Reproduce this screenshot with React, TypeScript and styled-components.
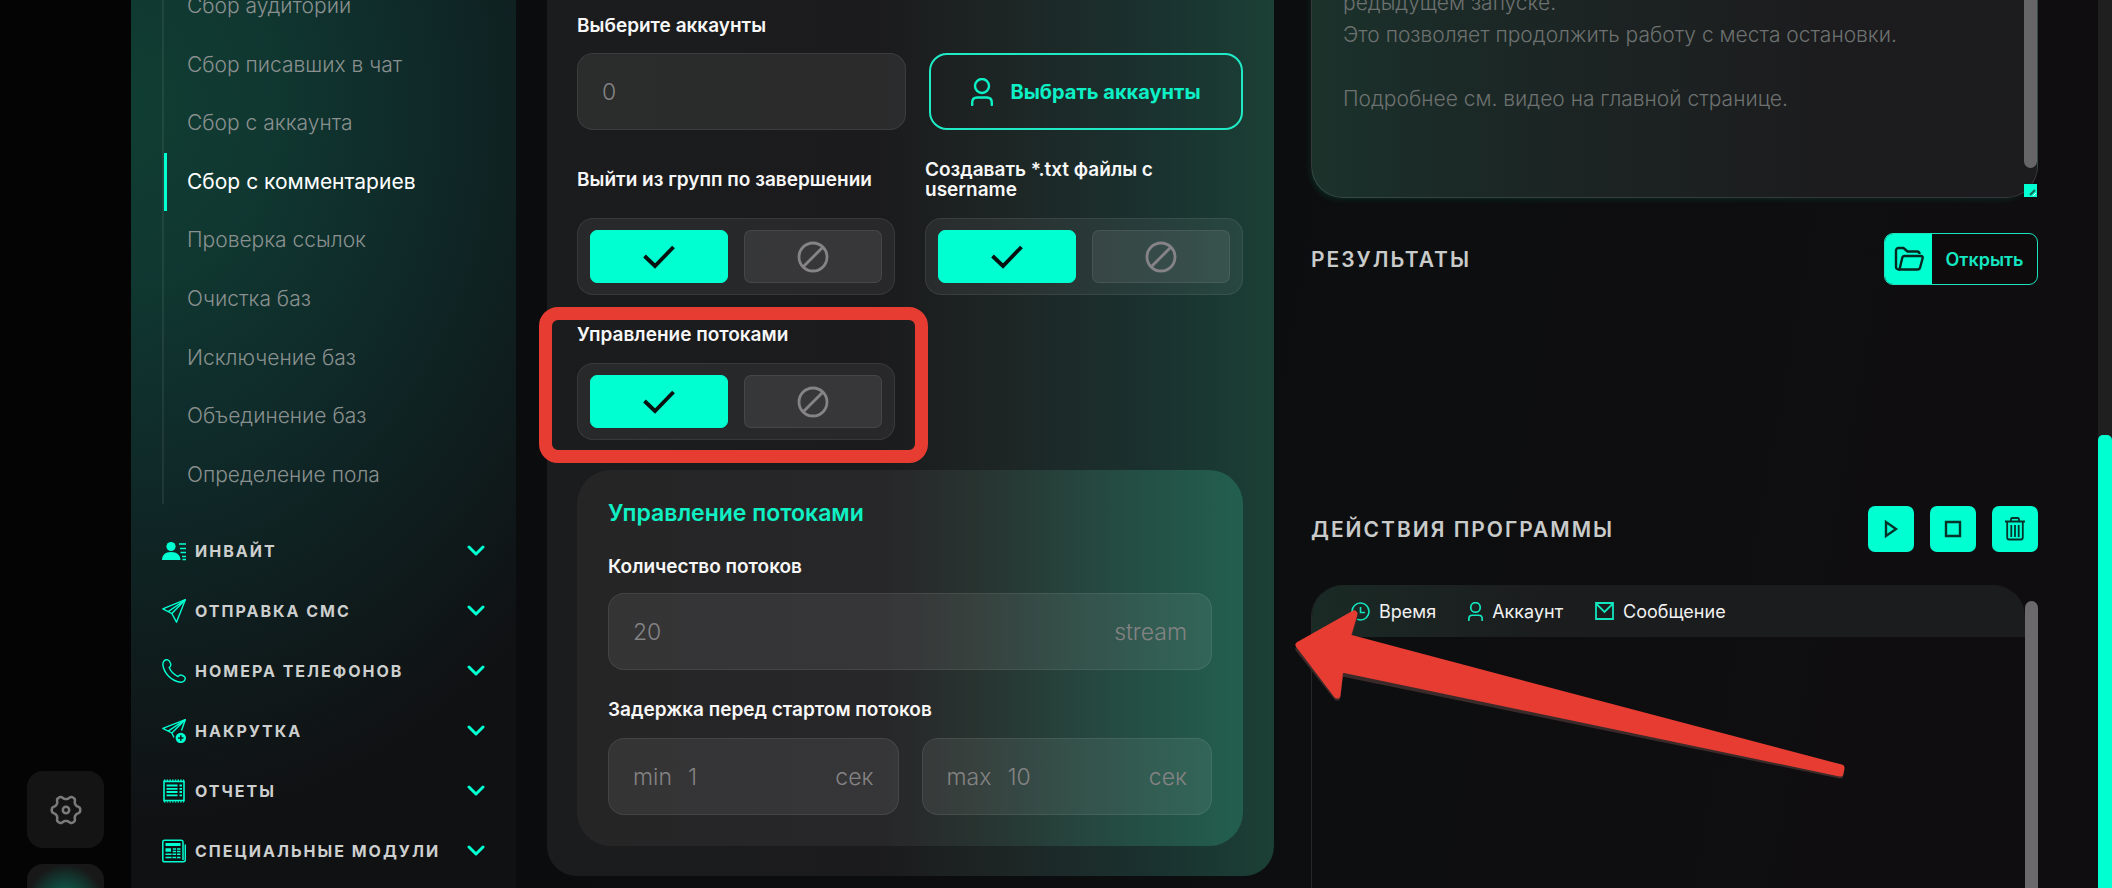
import React from "react";
import styled, { createGlobalStyle, css } from "styled-components";

const ACCENT = "#00ffd1";
const RED = "#e63c32";

const GlobalStyle = createGlobalStyle`
  *, *::before, *::after { box-sizing: border-box; }
  body {
    margin: 0;
    background: #0d0d0e;
    color: #fff;
    font-family: Inter, "Noto Sans", sans-serif;
  }
  button, input, textarea { font: inherit; color: inherit; }
  button { padding: 0; cursor: pointer; }
  ul, fieldset { margin: 0; padding: 0; border: 0; list-style: none; }
  svg { display: block; flex: none; }
`;

/* ---------- shell ---------- */

const Page = styled.div`
  display: grid;
  grid-template-columns: 131px 385px minmax(0, 777fr) minmax(0, 805fr) 14px;
  min-height: 100vh;
  overflow: hidden;
  background: linear-gradient(100deg, #0b0c0e 30%, #0d0e0f 65%, #100d10);
`;

const Rail = styled.aside`
  display: flex;
  flex-direction: column;
  align-items: center;
  justify-content: flex-end;
  gap: 16px;
  background: #040404;
`;

const RailButton = styled.button<{ $glow?: boolean }>`
  display: grid;
  place-items: center;
  width: 77px;
  height: 77px;
  border: 0;
  border-radius: 16px;
  color: #7b7b7b;
  background: #141414;
  ${(p) =>
    p.$glow &&
    css`
      margin-bottom: -53px;
      background: radial-gradient(circle, #0d6b58 0, #123a32 24px, #181818 38px);
    `}
`;

const Sidebar = styled.nav`
  padding: 0 31px;
  background: radial-gradient(
    ellipse 580px 720px at 0 12%,
    #103d32 0,
    #103831 22%,
    #0f2a29 50%,
    #0f1d1e 74%,
    #101113 100%
  );
`;

const SubMenu = styled.ul`
  display: grid;
  grid-template-rows: repeat(9, 1fr);
  height: 527px;
  margin-top: -23px;
  border-left: 2px solid rgba(255, 255, 255, 0.07);
`;

const SubItem = styled.li<{ $active?: boolean }>`
  display: flex;
  align-items: center;
  padding-left: 20px;
  border-left: 3px solid ${(p) => (p.$active ? ACCENT : "transparent")};
`;

const SubLink = styled.a<{ $active?: boolean }>`
  font-size: 21px;
  line-height: 28px;
  font-weight: ${(p) => (p.$active ? 400 : 300)};
  color: ${(p) => (p.$active ? "#fff" : "#8a908f")};
  text-decoration: none;
`;

const Menu = styled.ul`
  margin-top: 17px;
`;

const MenuButton = styled.button`
  display: flex;
  align-items: center;
  gap: 9px;
  width: 100%;
  height: 60px;
  border: 0;
  background: none;
  color: ${ACCENT};
`;

const MenuText = styled.span`
  flex: 1;
  text-align: left;
  font-size: 16px;
  font-weight: 700;
  letter-spacing: 2px;
  white-space: nowrap;
  color: #cdcfcf;
`;

/* ---------- settings column ---------- */

const SettingsColumn = styled.main`
  padding: 0 19px 12px 31px;
`;

const SettingsPanel = styled.form`
  position: relative;
  padding: 16px 31px 30px 30px;
  border-radius: 0 0 30px 30px;
  background: linear-gradient(90deg, #1b1c1d 0, #1b1b1d 46%, #1d2524 62%, #1a3230 84%, #1b4035 100%);
`;

const Label = styled.label`
  display: block;
  font-size: 19px;
  font-weight: 600;
  line-height: 20px;
  color: #f7f7f7;
`;

const AccountRow = styled.div`
  display: grid;
  grid-template-columns: 329fr 314fr;
  gap: 23px;
  margin-top: 17px;
`;

const Field = styled.div<{ $top?: boolean }>`
  display: flex;
  align-items: center;
  gap: 16px;
  min-width: 0;
  height: 77px;
  margin-top: ${(p) => (p.$top ? 16 : 0)}px;
  padding: 0 24px;
  border: 1px solid rgba(255, 255, 255, 0.08);
  border-radius: 16px;
  background: rgba(255, 255, 255, 0.07);
  font-size: 23px;
  font-weight: 300;
  color: #848384;
`;

const FieldInput = styled.input`
  flex: 1;
  width: 0;
  min-width: 0;
  padding: 0;
  border: 0;
  outline: 0;
  background: none;
`;

const PickButton = styled.button`
  display: flex;
  align-items: center;
  justify-content: center;
  gap: 17px;
  height: 77px;
  border: 2px solid #1feac5;
  border-radius: 18px;
  background: none;
  font-size: 20px;
  font-weight: 700;
  color: #0df0c6;
`;

const ToggleGrid = styled.div`
  display: grid;
  grid-template-columns: 1fr 1fr;
  gap: 30px;
  margin-top: 30px;
`;

const ToggleGroup = styled.fieldset`
  position: relative;
  min-width: 0;
`;

const Legend = styled.legend<{ $tall?: boolean }>`
  display: flex;
  align-items: center;
  width: 100%;
  height: ${(p) => (p.$tall ? 40 : 20)}px;
  margin-bottom: 18px;
  padding: 0;
  font-size: 19px;
  font-weight: 600;
  line-height: 20px;
  color: #f7f7f7;
`;

const ToggleTrack = styled.div`
  display: grid;
  grid-template-columns: 1fr 1fr;
  gap: 16px;
  height: 77px;
  padding: 11px 12px;
  border: 1px solid rgba(255, 255, 255, 0.08);
  border-radius: 16px;
  background: rgba(255, 255, 255, 0.06);
`;

const Option = styled.label`
  position: relative;
  display: grid;
  place-items: center;
  border: 1px solid rgba(255, 255, 255, 0.08);
  border-radius: 7px;
  background: rgba(255, 255, 255, 0.07);
  color: #858386;
  cursor: pointer;
  &:has(input:checked) {
    border-color: ${ACCENT};
    background: ${ACCENT};
    color: #08110f;
  }
`;

const HiddenRadio = styled.input`
  position: absolute;
  inset: 0;
  margin: 0;
  opacity: 0;
`;

const ThreadsToggle = styled.div`
  position: relative;
  width: calc(50% - 15px);
  margin-top: 30px;
`;

const Highlight = styled.div`
  position: absolute;
  inset: -18px -33px -23px -38px;
  border: 13px solid ${RED};
  border-radius: 19px;
  pointer-events: none;
`;

const ThreadsPanel = styled.section`
  margin-top: 30px;
  padding: 31px;
  border-radius: 34px;
  background: linear-gradient(90deg, #252526 0, #272628 45%, #283330 60%, #25463e 76%, #225f4f 100%);
`;

const ThreadsTitle = styled.h2`
  margin: 0 0 32px;
  font-size: 23px;
  font-weight: 600;
  line-height: 24px;
  color: #0ff0c4;
`;

const DelayLabel = styled(Label)`
  margin-top: 30px;
`;

const DelayRow = styled.div`
  display: grid;
  grid-template-columns: 1fr 1fr;
  gap: 23px;
  margin-top: 18px;
`;

/* ---------- output column ---------- */

const OutputColumn = styled.section`
  position: relative;
  display: flex;
  flex-direction: column;
  min-width: 0;
  padding: 0 60px 0 18px;
`;

const HelpBox = styled.div`
  position: relative;
  height: 215px;
  margin-top: -17px;
  border: 1px solid rgba(255, 255, 255, 0.12);
  border-top: 0;
  border-radius: 0 0 32px 32px;
  background: linear-gradient(90deg, #1b322b 0, #1b2a27 18%, #1c2322 42%, #1c1c1e 70%);
  box-shadow: -3px 4px 6px -3px rgba(0, 130, 95, 0.25);
`;

const HelpText = styled.textarea`
  display: block;
  width: 100%;
  height: 100%;
  padding: 4px 48px 0 31px;
  border: 0;
  outline: 0;
  resize: none;
  overflow: hidden;
  background: none;
  font-size: 21px;
  font-weight: 300;
  line-height: 32px;
  color: #6d7170;
`;

const HelpThumb = styled.div`
  position: absolute;
  top: 0;
  right: 0;
  width: 13px;
  height: 185px;
  border-radius: 7px;
  background: #666567;
`;

const Resizer = styled.svg`
  position: absolute;
  right: 0;
  bottom: 0;
`;

const SectionHead = styled.header<{ $gap: number; $height: number }>`
  display: flex;
  align-items: center;
  justify-content: space-between;
  height: ${(p) => p.$height}px;
  margin-top: ${(p) => p.$gap}px;
`;

const SectionTitle = styled.h2`
  margin: 0;
  font-size: 21px;
  font-weight: 600;
  letter-spacing: 2px;
  color: #c9cbca;
`;

const OpenButton = styled.button`
  display: flex;
  width: 154px;
  height: 52px;
  overflow: hidden;
  border: 1px solid #1be3bf;
  border-radius: 9px;
  background: #0d0b0c;
  font-size: 18px;
  font-weight: 600;
  color: #14e8c2;
`;

const OpenIcon = styled.span`
  display: grid;
  place-items: center;
  width: 47px;
  height: 100%;
  background: ${ACCENT};
  color: #062620;
`;

const OpenText = styled.span`
  flex: 1;
  align-self: center;
  text-align: center;
`;

const Actions = styled.div`
  display: flex;
  gap: 16px;
`;

const ActionButton = styled.button`
  display: grid;
  place-items: center;
  width: 46px;
  height: 46px;
  border: 0;
  border-radius: 7px;
  background: ${ACCENT};
  color: #04332a;
`;

const Log = styled.div`
  position: relative;
  flex: 1;
  margin-top: 33px;
  padding-right: 13px;
  border-left: 1px solid #27272a;
  border-radius: 32px 32px 0 0;
`;

const LogHead = styled.div`
  height: 52px;
  padding-left: 39px;
  border-radius: 32px 32px 0 0;
  background: linear-gradient(90deg, #1a2a25 0, #1b2422 14%, #1b1c1d 34%);
`;

const LogTable = styled.table`
  border-collapse: collapse;
`;

const LogCell = styled.th`
  height: 52px;
  padding: 0 32px 0 0;
  font-size: 18px;
  font-weight: 400;
`;

const LogCellContent = styled.span`
  display: flex;
  align-items: center;
  gap: 9px;
  color: #f1f1f1;
  svg { color: #12e6bf; }
`;

const LogThumb = styled.div`
  position: absolute;
  top: 16px;
  right: 0;
  bottom: 0;
  width: 13px;
  border-radius: 7px 7px 0 0;
  background: #6b696b;
`;

const Arrow = styled.svg`
  position: absolute;
  left: 0;
  top: 605px;
  overflow: visible;
  pointer-events: none;
`;

const PageScroll = styled.div`
  display: flex;
  align-items: flex-end;
  background: #1f1f20;
`;

const PageThumb = styled.div`
  width: 100%;
  height: 51%;
  border-radius: 5px 5px 0 0;
  background: ${ACCENT};
`;

/* ---------- icons ---------- */

const stroke = { fill: "none", stroke: "currentColor", strokeLinejoin: "round" as const };

const InviteIcon = () => (
  <svg width="24" height="24" viewBox="0 0 24 24" fill="currentColor">
    <circle cx="9" cy="7.5" r="4.6" />
    <path d="M0 21c0-4.500 3-8 9-8s9.500 3.500 9.500 8z" />
    <path d="M17 5h7M18 9.500h6M18.500 13.500H24M20 17.500h4M20.500 20.500H24" stroke="currentColor" strokeWidth="1.300" />
  </svg>
);

const PlaneIcon = () => (
  <svg width="24" height="24" viewBox="0 0 24 24" {...stroke} strokeWidth="1.400">
    <path d="M.8 9.800 23.300.7 14.500 23.200 9.800 14.500z" />
    <path d="M23.300.7 9.800 14.500M23.300.7 6.200 12.600" />
  </svg>
);

const PhoneIcon = () => (
  <svg width="24" height="24" viewBox="0 0 24 24" {...stroke} strokeWidth="1.400">
    <path d="M5.800.9C3.300 0 .8 2.200.8 5.400 1.800 14.500 9.500 22 18.500 23.200c3 .2 5-2 4.700-4.500-.2-1-1-1.500-3.500-2.600-1.700-.6-2.500 0-3.700 1.500-3.600-1.600-7.300-5.400-8.800-9C9 7.200 9.200 6.200 8.600 4.500 7.800 2.300 7 1.200 5.800.9z" />
  </svg>
);

const PlanePlusIcon = () => (
  <svg width="24" height="24" viewBox="0 0 24 24" {...stroke} strokeWidth="1.400">
    <path d="M12 18.500 9.800 14 .8 9.300 23.300.7 19.500 11.500" />
    <path d="M23.300.7 9.800 14M23.300.7 6.200 12.200" />
    <circle cx="18.800" cy="19" r="5.200" fill="currentColor" stroke="none" />
    <path d="M18.800 16.300v5.400M16.100 19h5.400" stroke="#10201d" strokeWidth="1.600" />
  </svg>
);

const ReportIcon = () => (
  <svg width="24" height="24" viewBox="0 0 24 24" {...stroke} strokeWidth="1.400">
    <path d="M2 1.500V22.500M22 1.500V22.500" strokeWidth="1.600" />
    <path d="M2 2.500h20M2 21.500h20" />
    <path d="M2 1.200h20M2 22.900h20" strokeDasharray="1.500 1.200" />
    <path d="M4.500 6.500h11M4.500 9.800h11M4.500 13h11M4.500 16.300h11M17.500 6.500h2.500M17.500 9.800h2.500M17.500 13h2.500M17.500 16.300h2.500" strokeWidth="1.800" />
  </svg>
);

const NewsIcon = () => (
  <svg width="24" height="24" viewBox="0 0 24 24" {...stroke} strokeWidth="1.500">
    <path d="M21 21V3c0-1-.5-1.800-1.500-1.800h-17C1.500 1.200.8 2 .8 3v18c0 1 .7 1.800 1.700 1.800h19c1.200 0 1.800-1 1.800-2V5.500" />
    <path d="M3.500 5.500h15" strokeWidth="3" />
    <path d="M3.500 11h5.500" strokeWidth="3.500" />
    <path d="M3.500 15.200h15M3.500 18.500h15M10.500 10h8M10.500 12.500h8" />
    <path d="M10 9v10.500M14.500 9v10.500" stroke="#0f1c1b" strokeWidth="1" />
  </svg>
);

const Chevron = () => (
  <svg width="18" height="12" viewBox="0 0 18 12" fill="none" stroke="currentColor" strokeWidth="3" strokeLinecap="round" strokeLinejoin="round">
    <path d="M2 2l7 7 7-7" />
  </svg>
);

const gearPath = Array.from({ length: 72 }, (_, i) => {
  const a = (i / 72) * Math.PI * 2;
  const wave = Math.cos(6 * a);
  const r = 12.6 + 1.7 * Math.sign(wave) * Math.sqrt(Math.abs(wave));
  return `${i ? "L" : "M"}${(16 + r * Math.cos(a)).toFixed(1)} ${(16 + r * Math.sin(a)).toFixed(1)}`;
}).join("");

const GearIcon = () => (
  <svg width="32" height="32" viewBox="0 0 32 32" {...stroke} strokeWidth="2.500">
    <path d={gearPath + "Z"} />
    <circle cx="16" cy="16" r="3.200" />
  </svg>
);

const PersonIcon = ({ w, h, sw }: { w: number; h: number; sw: number }) => (
  <svg width={w} height={h} viewBox="0 0 22 28" {...stroke} strokeWidth={sw} strokeLinecap="round">
    <circle cx="11" cy="8" r="7" />
    <path d="M1.200 27v-2.500c0-3 2-5 5-5h9.600c3 0 5 2 5 5V27" />
  </svg>
);

const CheckIcon = () => (
  <svg width="32" height="24" viewBox="0 0 32 24" fill="none" stroke="currentColor" strokeWidth="3.800">
    <path d="M1.500 11 12 21 30.500 2" />
  </svg>
);

const BanIcon = () => (
  <svg width="32" height="32" viewBox="0 0 32 32" fill="none" stroke="currentColor" strokeWidth="2.800">
    <circle cx="16" cy="16" r="14" />
    <path d="M6.500 25.500 25.500 6.500" />
  </svg>
);

const FolderIcon = () => (
  <svg width="30" height="26" viewBox="0 0 30 26" {...stroke} strokeWidth="2.400">
    <path d="M6 23.500H4.500A2.500 2.500 0 0 1 2 21V4.500A2.500 2.500 0 0 1 4.500 2h5l4 3.500h9.500A2.500 2.500 0 0 1 25.500 8" />
    <path d="M10.500 10H27c1.300 0 2 1 1.600 2.300l-2.500 9.200c-.3 1.200-1.200 2-2.500 2H5.500L8.200 12c.3-1.200 1-2 2.300-2z" />
  </svg>
);

const PlayIcon = () => (
  <svg width="16" height="20" viewBox="0 0 16 20" fill="none" stroke="currentColor" strokeWidth="2.400">
    <path d="M3 3v14l10-7z" />
  </svg>
);

const StopIcon = () => (
  <svg width="18" height="18" viewBox="0 0 18 18" fill="none" stroke="currentColor" strokeWidth="2.400">
    <path d="M2 2h14v14H2z" />
  </svg>
);

const TrashIcon = () => (
  <svg width="22" height="24" viewBox="0 0 22 24" fill="none" stroke="currentColor" strokeWidth="1.800" strokeLinejoin="round">
    <path d="M1 4.500h20" strokeWidth="2" />
    <path d="M7 4V2.300C7 1.500 7.500 1 8.300 1h5.400c.8 0 1.300.5 1.300 1.300V4M3.200 5v15.500c0 1.300.8 2 2 2h11.600c1.200 0 2-.7 2-2V5" />
    <path d="M7.300 8v12M11 8v12M14.700 8v12" />
  </svg>
);

const ClockIcon = () => (
  <svg width="19" height="19" viewBox="0 0 19 19" fill="none" stroke="currentColor" strokeWidth="1.600">
    <circle cx="9.500" cy="9.500" r="8.500" />
    <path d="M9.500 5v5.500h4.500" />
  </svg>
);

const MailIcon = () => (
  <svg width="19" height="18" viewBox="0 0 19 18" fill="none" stroke="currentColor" strokeWidth="1.800">
    <path d="M1 1h17v16H1zM1.500 2l8 8 8-8" />
  </svg>
);

/* ---------- composed parts ---------- */

const subItems = [
  "Сбор аудитории",
  "Сбор писавших в чат",
  "Сбор с аккаунта",
  "Сбор с комментариев",
  "Проверка ссылок",
  "Очистка баз",
  "Исключение баз",
  "Объединение баз",
  "Определение пола",
];

const menuItems = [
  { text: "ИНВАЙТ", Icon: InviteIcon },
  { text: "ОТПРАВКА СМС", Icon: PlaneIcon },
  { text: "НОМЕРА ТЕЛЕФОНОВ", Icon: PhoneIcon },
  { text: "НАКРУТКА", Icon: PlanePlusIcon },
  { text: "ОТЧЕТЫ", Icon: ReportIcon },
  { text: "СПЕЦИАЛЬНЫЕ МОДУЛИ", Icon: NewsIcon },
];

const helpText = "редыдущем запуске.\nЭто позволяет продолжить работу с места остановки.\n\nПодробнее см. видео на главной странице.";

const Toggle = ({ name, title, tall }: { name: string; title: string; tall?: boolean }) => (
  <ToggleGroup>
    <Legend $tall={tall}>{title}</Legend>
    <ToggleTrack>
      <Option>
        <HiddenRadio type="radio" name={name} aria-label="Да" defaultChecked />
        <CheckIcon />
      </Option>
      <Option>
        <HiddenRadio type="radio" name={name} aria-label="Нет" />
        <BanIcon />
      </Option>
    </ToggleTrack>
  </ToggleGroup>
);

export default function App() {
  return (
    <>
      <GlobalStyle />
      <Page>
        <Rail>
          <RailButton type="button" aria-label="Настройки">
            <GearIcon />
          </RailButton>
          <RailButton type="button" aria-label="Профиль" $glow />
        </Rail>

        <Sidebar>
          <SubMenu>
            {subItems.map((text) => {
              const active = text === "Сбор с комментариев";
              return (
                <SubItem key={text} $active={active}>
                  <SubLink href="#" $active={active}>
                    {text}
                  </SubLink>
                </SubItem>
              );
            })}
          </SubMenu>
          <Menu>
            {menuItems.map(({ text, Icon }) => (
              <li key={text}>
                <MenuButton type="button">
                  <Icon />
                  <MenuText>{text}</MenuText>
                  <Chevron />
                </MenuButton>
              </li>
            ))}
          </Menu>
        </Sidebar>

        <SettingsColumn>
          <SettingsPanel>
            <Label htmlFor="accounts">Выберите аккаунты</Label>
            <AccountRow>
              <Field>
                <FieldInput id="accounts" defaultValue="0" />
              </Field>
              <PickButton type="button">
                <PersonIcon w={22} h={28} sw={2.4} />
                Выбрать аккаунты
              </PickButton>
            </AccountRow>

            <ToggleGrid>
              <Toggle name="leave" title="Выйти из групп по завершении" tall />
              <Toggle name="files" title="Создавать *.txt файлы с username" tall />
            </ToggleGrid>
            <ThreadsToggle>
              <Toggle name="threads" title="Управление потоками" />
              <Highlight />
            </ThreadsToggle>

            <ThreadsPanel>
              <ThreadsTitle>Управление потоками</ThreadsTitle>
              <Label htmlFor="count">Количество потоков</Label>
              <Field $top>
                <FieldInput id="count" defaultValue="20" />
                <span>stream</span>
              </Field>
              <DelayLabel htmlFor="delay-min">Задержка перед стартом потоков</DelayLabel>
              <DelayRow>
                <Field>
                  <span>min</span>
                  <FieldInput id="delay-min" defaultValue="1" />
                  <span>сек</span>
                </Field>
                <Field>
                  <label htmlFor="delay-max">max</label>
                  <FieldInput id="delay-max" defaultValue="10" />
                  <span>сек</span>
                </Field>
              </DelayRow>
            </ThreadsPanel>
          </SettingsPanel>
        </SettingsColumn>

        <OutputColumn>
          <HelpBox>
            <HelpText aria-label="Описание" readOnly value={helpText} />
            <HelpThumb />
            <Resizer width="13" height="13" viewBox="0 0 13 13">
              <path d="M0 0h13v13H0z" fill={ACCENT} />
              <path d="M6 11 11 6" stroke="#17695a" strokeWidth="2" />
              <path d="M9 12 12 9" stroke="#d9fff6" />
            </Resizer>
          </HelpBox>

          <SectionHead $gap={35} $height={52}>
            <SectionTitle>РЕЗУЛЬТАТЫ</SectionTitle>
            <OpenButton type="button">
              <OpenIcon>
                <FolderIcon />
              </OpenIcon>
              <OpenText>Открыть</OpenText>
            </OpenButton>
          </SectionHead>

          <SectionHead $gap={221} $height={46}>
            <SectionTitle>ДЕЙСТВИЯ ПРОГРАММЫ</SectionTitle>
            <Actions>
              <ActionButton type="button" aria-label="Запустить">
                <PlayIcon />
              </ActionButton>
              <ActionButton type="button" aria-label="Остановить">
                <StopIcon />
              </ActionButton>
              <ActionButton type="button" aria-label="Очистить">
                <TrashIcon />
              </ActionButton>
            </Actions>
          </SectionHead>

          <Log>
            <LogHead>
              <LogTable>
                <thead>
                  <tr>
                    <LogCell scope="col">
                      <LogCellContent>
                        <ClockIcon />
                        Время
                      </LogCellContent>
                    </LogCell>
                    <LogCell scope="col">
                      <LogCellContent>
                        <PersonIcon w={15} h={19} sw={2.5} />
                        Аккаунт
                      </LogCellContent>
                    </LogCell>
                    <LogCell scope="col">
                      <LogCellContent>
                        <MailIcon />
                        Сообщение
                      </LogCellContent>
                    </LogCell>
                  </tr>
                </thead>
              </LogTable>
            </LogHead>
            <LogThumb />
          </Log>

          <Arrow width="555" height="175" viewBox="0 0 555 175">
            <path
              d="M6 42 61 11 54 33.500 548 163 547 168 47 65.500 44 90z"
              transform="translate(0 2)"
              fill="#3a2a2a"
              stroke="#3a2a2a"
              strokeWidth="7"
              strokeLinejoin="round"
            />
            <path d="M6 40 61 9 54 32.500 548 163 547 168 47 63.500 44 90z" fill={RED} stroke={RED} strokeWidth="7" strokeLinejoin="round" />
          </Arrow>
        </OutputColumn>

        <PageScroll>
          <PageThumb />
        </PageScroll>
      </Page>
    </>
  );
}
